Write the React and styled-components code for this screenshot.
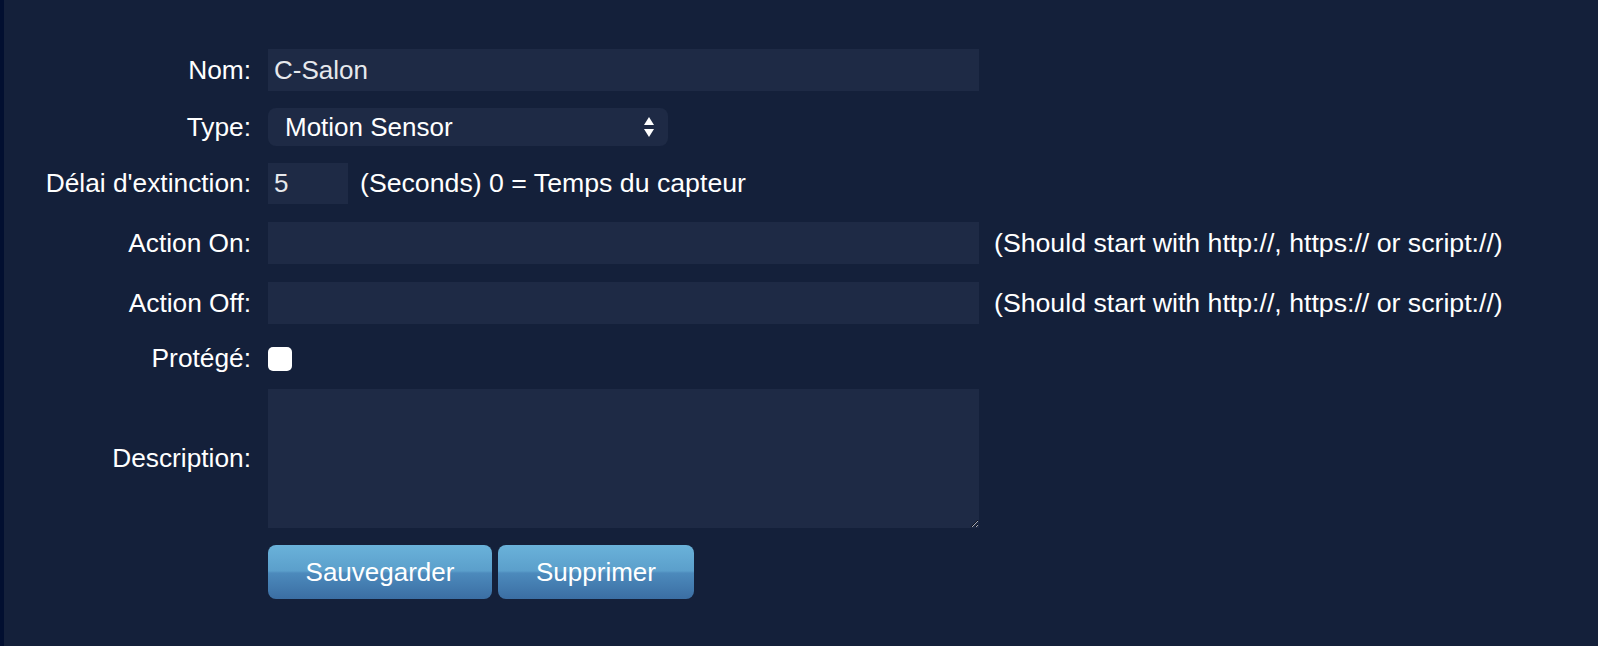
import React from 'react';
import styled, { createGlobalStyle } from 'styled-components';

const GlobalStyle = createGlobalStyle`
  html, body {
    margin: 0;
    padding: 0;
    background: #14203a;
  }
  body {
    font-family: 'Liberation Sans', Arial, sans-serif;
  }
`;

const Page = styled.div`
  min-height: 646px;
  background: #14203a;
  border-left: 4px solid #020f30;
  box-sizing: border-box;
  padding-top: 49px;
  color: #fff;
  font-size: 26px;
`;

const Row = styled.div`
  display: flex;
  align-items: center;
  gap: 17px;
  margin-bottom: ${(p) => p.$gap ?? 17}px;
  margin-top: ${(p) => p.$top || 0}px;
  height: ${(p) => (p.$h ? `${p.$h}px` : 'auto')};
`;

const Label = styled.label`
  width: 247px;
  flex: none;
  text-align: right;
  color: #fff;
  font-size: 26.3px;
  white-space: nowrap;
`;

const Field = styled.div`
  display: flex;
  align-items: center;
  gap: ${(p) => p.$gap || 12}px;
`;

const TextInput = styled.input`
  box-sizing: border-box;
  width: ${(p) => p.$w || 711}px;
  height: ${(p) => p.$h || 42}px;
  background: #1e2a45;
  border: none;
  outline: none;
  padding: 0 6px;
  color: #e6e8ec;
  font-family: inherit;
  font-size: 26px;
`;

const Hint = styled.span`
  color: #fff;
  font-size: 26.7px;
  white-space: nowrap;
`;

const SelectBox = styled.div`
  box-sizing: border-box;
  width: 400px;
  height: 38px;
  border-radius: 8px;
  background: #1e2a45;
  display: flex;
  align-items: center;
  justify-content: space-between;
  padding: 0 13px 0 17px;
  color: #fff;
`;

const Check = styled.span`
  display: inline-block;
  width: 24px;
  height: 24px;
  border-radius: 5px;
  background: #fff;
`;

const TextArea = styled.textarea`
  box-sizing: border-box;
  width: 711px;
  height: 139px;
  background: #1e2a45;
  border: none;
  outline: none;
  color: #e6e8ec;
  font-family: inherit;
  font-size: 26px;
  padding: 6px;
  display: block;
`;

const Buttons = styled.div`
  display: flex;
  gap: 6px;
  margin-left: 264px;
`;

const Button = styled.button`
  width: ${(p) => p.$w}px;
  height: 54px;
  border: none;
  border-radius: 8px;
  color: #fff;
  font-family: inherit;
  font-size: 26px;
  padding: 0;
  background: linear-gradient(
    180deg,
    #6ab2da 0%,
    #5b9fcb 48%,
    #4c8abc 52%,
    #3b6ea3 100%
  );
  cursor: pointer;
`;

const Arrows = () => (
  <svg width="12" height="24" viewBox="0 0 12 24">
    <path d="M6 2 L11 10 H1 Z" fill="#fff" />
    <path d="M6 22 L11 14 H1 Z" fill="#fff" />
  </svg>
);

export default function App() {
  return (
    <>
      <GlobalStyle />
      <Page>
        <Row>
          <Label>Nom:</Label>
          <TextInput defaultValue="C-Salon" />
        </Row>
        <Row>
          <Label>Type:</Label>
          <SelectBox>
            <span>Motion Sensor</span>
            <Arrows />
          </SelectBox>
        </Row>
        <Row $gap={18}>
          <Label>Délai d'extinction:</Label>
          <Field>
            <TextInput $w={80} $h={41} defaultValue="5" />
            <Hint>(Seconds) 0 = Temps du capteur</Hint>
          </Field>
        </Row>
        <Row $gap={18}>
          <Label>Action On:</Label>
          <Field $gap={15}>
            <TextInput />
            <Hint>(Should start with http://, https:// or script://)</Hint>
          </Field>
        </Row>
        <Row $gap={16}>
          <Label>Action Off:</Label>
          <Field $gap={15}>
            <TextInput />
            <Hint>(Should start with http://, https:// or script://)</Hint>
          </Field>
        </Row>
        <Row $gap={12} $h={37}>
          <Label>Protégé:</Label>
          <Check />
        </Row>
        <Row>
          <Label>Description:</Label>
          <TextArea />
        </Row>
        <Buttons>
          <Button $w={224}>Sauvegarder</Button>
          <Button $w={196}>Supprimer</Button>
        </Buttons>
      </Page>
    </>
  );
}
